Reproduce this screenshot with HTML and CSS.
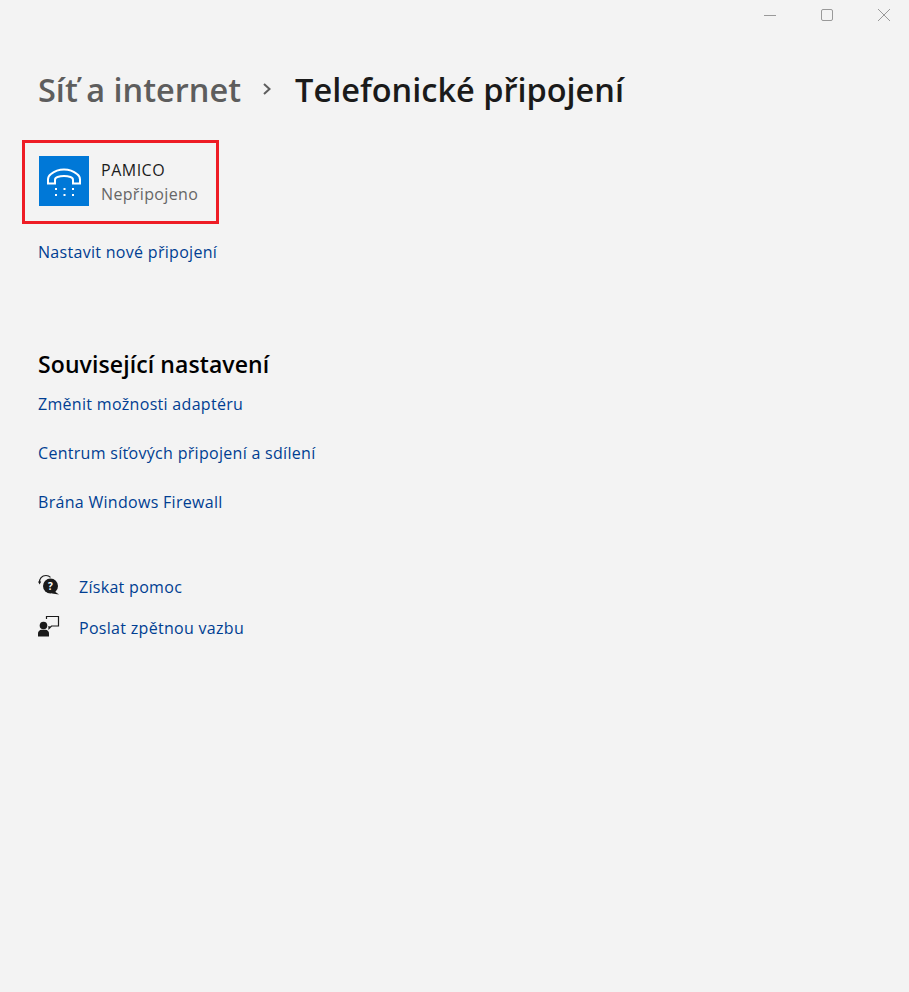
FILE: index.html
```html
<!DOCTYPE html>
<html lang="cs">
<head>
    <meta charset="utf-8">
    <title>Telefonické připojení</title>
    <link rel="stylesheet" href="styles.css">
</head>
<body>
    <div class="titlebar">
        <svg class="win-btn" width="14" height="14" viewBox="0 0 14 14"><path d="M1 7.500h12" /></svg>
        <svg class="win-btn" width="14" height="14" viewBox="0 0 14 14"><rect x="1.500" y="1.500" width="11" height="11" rx="1.500" /></svg>
        <svg class="win-btn" width="14" height="14" viewBox="0 0 14 14"><path d="M1 1l12 12M13 1L1 13" /></svg>
    </div>

    <div class="content">
        <h1 class="crumbs">
            <span class="crumb-parent">Síť a internet</span>
            <svg class="crumb-sep" width="10" height="14" viewBox="0 0 10 14"><path d="M2 2l5.500 5-5.500 5" /></svg>
            <span class="crumb-current">Telefonické připojení</span>
        </h1>

        <div class="conn-wrap">
            <div class="conn">
                <div class="conn-icon">
                    <svg width="50" height="50" viewBox="0 0 50 50">
                        <path class="phone" d="M9 27.500v-4c0-2 1-4 3-5.500 3-2.500 8-4.500 13-4.500s10 2 13 4.500c2 1.500 3 3.500 3 5.500v4h-7v-3.500c0-1.500-1-2.500-2.500-3-2-.7-4.500-1-6.500-1s-4.500.3-6.500 1c-1.500.5-2.500 1.500-2.500 3v3.500z" />
                        <g class="keys">
                            <rect x="16" y="32" width="2" height="2" /><rect x="24.500" y="32" width="2" height="2" /><rect x="33" y="32" width="2" height="2" />
                            <rect x="16" y="38" width="2" height="2" /><rect x="24.500" y="38" width="2" height="2" /><rect x="33" y="38" width="2" height="2" />
                        </g>
                    </svg>
                </div>
                <div class="conn-text">
                    <div class="conn-name">PAMICO</div>
                    <div class="conn-status">Nepřipojeno</div>
                </div>
            </div>
        </div>

        <a class="link new-conn" href="#">Nastavit nové připojení</a>

        <h2 class="related-title">Související nastavení</h2>
        <div class="related">
            <a class="link" href="#">Změnit možnosti adaptéru</a>
            <a class="link" href="#">Centrum síťových připojení a sdílení</a>
            <a class="link" href="#">Brána Windows Firewall</a>
        </div>

        <div class="help">
            <div class="help-row">
                <svg width="22" height="22" viewBox="0 0 22 22">
                    <path class="outline" d="M1.500 9C1 4.500 4 1.500 8 1.500c1.800 0 3.300.6 4.500 1.800" />
                    <path class="fill" d="M0 7.500h3.200l-1.600 3z" />
                    <circle class="fill" cx="12.500" cy="12" r="7.500" />
                    <path class="fill" d="M16 17l5 3.500-7-1z" />
                    <text class="q" x="12.500" y="15.500">?</text>
                </svg>
                <a class="link" href="#">Získat pomoc</a>
            </div>
            <div class="help-row">
                <svg width="22" height="22" viewBox="0 0 22 22">
                    <circle class="fill" cx="5.500" cy="10.500" r="3.800" />
                    <path class="fill" d="M0 21.500v-3c0-2 1.500-3.800 3.500-3.800h4c2 0 3.500 1.800 3.500 3.800v3z" />
                    <path class="outline" d="M8.500 4V1.500h12v9.500h-7l-2.500 2.500V11" />
                </svg>
                <a class="link" href="#">Poslat zpětnou vazbu</a>
            </div>
        </div>
    </div>
</body>
</html>
```

FILE: styles.css
```css
*{
    box-sizing: border-box;
}
body{
    margin: 0;
    height: 992px;
    background: #f3f3f3;
    font-family: "Open Sans", "Noto Sans", sans-serif;
    overflow: hidden;
}
.titlebar{
    display: flex;
    justify-content: flex-end;
    gap: 43px;
    padding: 8px 18px 0 0;
    height: 30px;
}
.win-btn{
    fill: none;
    stroke: #999;
    stroke-width: 1;
}
.content{
    padding: 0 38px;
}
.crumbs{
    display: flex;
    align-items: center;
    margin: 29px 0 0;
    height: 60px;
    font-size: 32.500px;
    font-weight: 600;
}
.crumb-parent{
    color: #5d5d5d;
}
.crumb-sep{
    margin: 0 23px 0 21px;
    fill: none;
    stroke: #5d5d5d;
    stroke-width: 2;
}
.crumb-current{
    color: #1a1a1a;
}
.conn-wrap{
    margin: 21px 0 0 -16px;
}
.conn{
    display: flex;
    align-items: center;
    gap: 12px;
    width: 197px;
    height: 84px;
    padding: 0 0 2px 14px;
    border: 3px solid #ee1c25;
}
.conn-icon{
    width: 50px;
    height: 50px;
    background: #0078d7;
}
.phone{
    fill: none;
    stroke: #fff;
    stroke-width: 2;
}
.keys{
    fill: #fff;
}
.conn-name{
    font-size: 16px;
    line-height: 26px;
    color: #1b1b1b;
    letter-spacing: 0.5px;
}
.conn-status{
    font-size: 16px;
    line-height: 23px;
    color: #666;
    letter-spacing: 0.35px;
}
.link{
    display: block;
    font-size: 16px;
    line-height: 22px;
    color: #003e92;
    text-decoration: none;
    letter-spacing: 0.3px;
}
.new-conn{
    margin-top: 17px;
}
.related-title{
    margin: 86px 0 0;
    font-size: 23px;
    line-height: 30px;
    font-weight: 600;
    color: #000;
    letter-spacing: 0.1px;
}
.related{
    display: flex;
    flex-direction: column;
    gap: 27px;
    margin-top: 14px;
}
.help{
    display: flex;
    flex-direction: column;
    gap: 19px;
    margin-top: 63px;
}
.help-row{
    display: flex;
    align-items: center;
    gap: 19px;
}
.help-row svg{
    flex: none;
    margin-top: -4px;
}
.fill{
    fill: #1a1a1a;
}
.outline{
    fill: none;
    stroke: #1a1a1a;
    stroke-width: 1.200;
}
.q{
    fill: #fff;
    font-size: 10px;
    font-weight: 700;
    text-anchor: middle;
}
```
